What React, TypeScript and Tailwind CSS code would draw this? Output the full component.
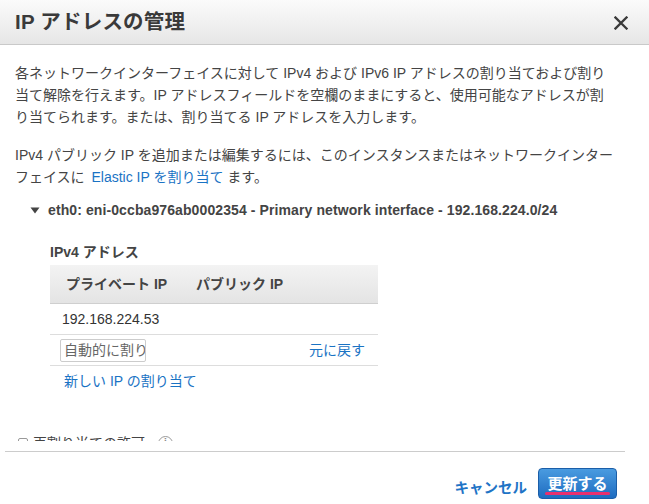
import React from "react";

const FONT = '"Liberation Sans", "Noto Sans CJK JP", sans-serif';

export default function App() {
  return (
    <div
      className="w-[649px] h-[504px] bg-white flex flex-col overflow-hidden text-[#444]"
      style={{ fontFamily: FONT }}
    >
      {/* Header */}
      <div className="h-[45px] shrink-0 flex items-center justify-between pl-[15px] pr-[21px] border-b border-[#c9c9c9] bg-gradient-to-b from-[#fbfbfb] to-[#e6e6e6]">
        <div className="text-[20.5px] font-bold text-[#3a3a3a] leading-none tracking-[0.2px]">IP アドレスの管理</div>
        <svg width="14" height="14" viewBox="0 0 14 14" className="mt-[1px]">
          <path d="M1.5 1.5 L12.5 12.5 M12.5 1.5 L1.5 12.5" stroke="#3a3a3a" strokeWidth="2.3" strokeLinecap="square" />
        </svg>
      </div>

      {/* Body */}
      <div className="h-[396px] shrink-0 overflow-hidden pl-[15px] pt-[17px] text-[14px] leading-[22px]">
        <p>
          各ネットワークインターフェイスに対して IPv4 および IPv6 IP アドレスの割り当ておよび割り
          <br />
          当て解除を行えます。IP アドレスフィールドを空欄のままにすると、使用可能なアドレスが割
          <br />
          り当てられます。または、割り当てる IP アドレスを入力します。
        </p>
        <p className="mt-[16px]">
          IPv4 パブリック IP を追加または編集するには、このインスタンスまたはネットワークインター
          <br />
          フェイスに <span className="text-[#1a73c4] ml-[3px]">Elastic IP を割り当て</span> ます。
        </p>

        <div className="mt-[11px] flex items-center">
          <svg width="10" height="7" viewBox="0 0 10 7" className="ml-[15px] mr-[8px]">
            <path d="M0.5 0.5 L9.5 0.5 L5 6.5 Z" fill="#444" />
          </svg>
          <span className="font-bold text-[14px] text-[#444] tracking-[0.1px]">
            eth0: eni-0ccba976ab0002354 - Primary network interface - 192.168.224.0/24
          </span>
        </div>

        <div className="ml-[35px] mt-[20px] font-bold">IPv4 アドレス</div>

        <div className="ml-[35px] mt-[2px] w-[328px]">
          <div className="h-[39px] flex items-center border-b border-[#cfcfcf] bg-gradient-to-b from-[#f3f3f3] to-[#e4e4e4] font-bold text-[#444]">
            <span className="ml-[16px] w-[130px]">プライベート IP</span>
            <span>パブリック IP</span>
          </div>
          <div className="h-[31px] flex items-center border-b border-[#dddddd] pl-[12px] text-[#333]">
            192.168.224.53
          </div>
          <div className="h-[31px] flex items-center justify-between border-b border-[#dddddd] pl-[10px] pr-[13px]">
            <div className="w-[86px] h-[23px] border border-[#cccccc] rounded-[2px] bg-white flex items-center pl-[3px] overflow-hidden whitespace-nowrap text-[#666]">
              自動的に割り当て
            </div>
            <span className="text-[#1a73c4]">元に戻す</span>
          </div>
          <div className="mt-[4px] pl-[14px] text-[#1a73c4]">新しい IP の割り当て</div>
        </div>

        <div className="mt-[40px] flex items-center">
          <div className="ml-[3px] w-[10px] h-[10px] border border-[#999] rounded-[2px] bg-white" />
          <span className="ml-[5px] text-[#444]">再割り当ての許可</span>
          <div className="ml-[13px] w-[15px] h-[15px] rounded-full border border-[#999] flex items-center justify-center text-[10px] font-bold text-[#888] leading-none">
            i
          </div>
        </div>
      </div>

      {/* Footer */}
      <div className="mt-[10px] mx-[5px] mr-[24px] border-t border-[#cccccc] flex items-start justify-end pt-[16px]">
        <span className="font-bold text-[#1f74c6] text-[14.5px] mt-[10px] mr-[11px]">キャンセル</span>
        <div className="mr-[8px] w-[79px] h-[31px] rounded-[4px] border border-[#1b5ea8] bg-gradient-to-b from-[#4a9be0] to-[#1d6cc0] flex flex-col items-center justify-center text-white font-bold text-[15px] relative">
          <span className="leading-none">更新する</span>
          <div className="absolute left-[6px] right-[6px] bottom-[3px] h-[3px] rounded-full bg-[#e8306f]" />
        </div>
      </div>
    </div>
  );
}
